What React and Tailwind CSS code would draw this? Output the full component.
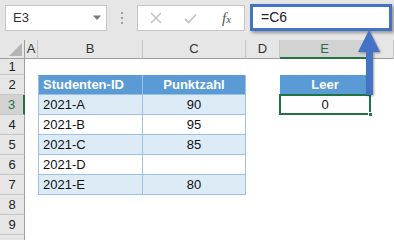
const COLS = [
  { key: "A", w: "w-[13px]" },
  { key: "B", w: "w-[105px]" },
  { key: "C", w: "w-[103px]" },
  { key: "D", w: "w-[34px]" },
  { key: "E", w: "w-[90px]" },
  { key: "", w: "flex-1" },
];

const tableRows = [
  { row: 3, id: "2021-A", score: "90", shade: true },
  { row: 4, id: "2021-B", score: "95", shade: false },
  { row: 5, id: "2021-C", score: "85", shade: true },
  { row: 6, id: "2021-D", score: "", shade: false },
  { row: 7, id: "2021-E", score: "80", shade: true },
];

function RowHead({ n, active }) {
  return (
    <div
      className={`w-[25px] shrink-0 flex items-center justify-center border-b border-[#c6c6c6] ${
        active
          ? "bg-[#d2d2d2] text-[#217346] border-r-2 border-r-[#217346]"
          : "bg-[#e6e6e6] text-[#222] border-r border-r-[#9f9f9f]"
      }`}
    >
      {n}
    </div>
  );
}

function Toolbar() {
  return (
    <div className="h-[40px] bg-[#e6e6e6] flex items-start pt-[5px] pl-[5px]">
      <div className="w-[102px] h-[26px] bg-white border border-[#c6c6c6] flex items-center justify-between pl-[7px] pr-[4px]">
        <span className="text-[13px] text-[#333]">E3</span>
        <svg width="10" height="6" viewBox="0 0 10 6">
          <path d="M1 0.5 L9 0.5 L5 5 Z" fill="#777" />
        </svg>
      </div>
      <div className="w-[30px] h-[26px] flex flex-col items-center justify-center gap-[3px]">
        <span className="w-[2px] h-[2px] bg-[#a0a0a0]" />
        <span className="w-[2px] h-[2px] bg-[#a0a0a0]" />
        <span className="w-[2px] h-[2px] bg-[#a0a0a0]" />
      </div>
      <div className="w-[108px] h-[26px] bg-white border border-[#c6c6c6] flex items-center">
        <svg className="ml-[12px]" width="12" height="12" viewBox="0 0 12 12">
          <path d="M1 1 L11 11 M11 1 L1 11" stroke="#c4c4c4" strokeWidth="1.5" />
        </svg>
        <svg className="ml-[22px]" width="13" height="11" viewBox="0 0 13 11">
          <path d="M1 6 L4.5 9.5 L12 1.5" stroke="#c4c4c4" strokeWidth="1.8" fill="none" />
        </svg>
        <span
          className="ml-[25px] text-[15px] italic text-[#555]"
          style={{ fontFamily: '"Liberation Serif", serif' }}
        >
          f<span className="text-[11px]">x</span>
        </span>
      </div>
      <div className="ml-[5px] -mt-[1px] w-[142px] h-[27px] bg-white border-[3px] border-[#4472c4] shadow-[2px_2px_3px_rgba(0,0,0,0.35)] flex items-center pl-[8px]">
        <span className="text-[14px] text-[#222]">=C6</span>
      </div>
    </div>
  );
}

function HeaderRow() {
  return (
    <div className="h-[19px] flex bg-[#e6e6e6] text-[13px] text-[#333]">
      <div className="w-[25px] shrink-0 border-r border-[#9f9f9f] border-b border-b-[#9f9f9f] relative">
        <svg className="absolute right-[2px] bottom-[2px]" width="13" height="13" viewBox="0 0 13 13">
          <path d="M13 0 L13 13 L0 13 Z" fill="#b4b4b4" />
        </svg>
      </div>
      {COLS.map((c, i) => (
        <div
          key={i}
          className={`${c.w} shrink-0 flex items-center justify-center border-r border-[#c6c6c6] ${
            c.key === "E"
              ? "bg-[#d2d2d2] text-[#217346] border-b-2 border-b-[#217346]"
              : "border-b border-b-[#9f9f9f]"
          }`}
        >
          {c.key}
        </div>
      ))}
    </div>
  );
}

export default function App() {
  return (
    <div
      className="relative w-[394px] h-[240px] overflow-hidden bg-white"
      style={{ fontFamily: '"Liberation Sans", Arial, sans-serif' }}
    >
      <Toolbar />
      <HeaderRow />

      <div className="text-[13px] text-[#111]">
        {/* row 1 */}
        <div className="h-[16px] flex">
          <RowHead n={1} />
        </div>

        {/* row 2: table header */}
        <div className="h-[20px] flex">
          <RowHead n={2} />
          <div className="w-[13px] shrink-0" />
          <div className="w-[105px] shrink-0 bg-[#5b9bd5] text-white font-bold flex items-center pl-[4px] border-l border-r border-b border-[#9bc2e6]">
            Studenten-ID
          </div>
          <div className="w-[103px] shrink-0 bg-[#5b9bd5] text-white font-bold flex items-center justify-center border-r border-b border-[#9bc2e6]">
            Punktzahl
          </div>
          <div className="w-[34px] shrink-0" />
          <div className="w-[90px] shrink-0 bg-[#5b9bd5] text-white font-bold flex items-center justify-center border-b border-[#9bc2e6]">
            Leer
          </div>
        </div>

        {tableRows.map((r) => (
          <div key={r.row} className="h-[20px] flex">
            <RowHead n={r.row} active={r.row === 3} />
            <div className="w-[13px] shrink-0" />
            <div
              className={`w-[105px] shrink-0 flex items-center pl-[4px] border-l border-r border-b border-[#9bc2e6] ${
                r.shade ? "bg-[#ddebf7]" : "bg-white"
              }`}
            >
              {r.id}
            </div>
            <div
              className={`w-[103px] shrink-0 flex items-center justify-center border-r border-b border-[#9bc2e6] ${
                r.shade ? "bg-[#ddebf7]" : "bg-white"
              }`}
            >
              {r.score}
            </div>
            <div className="w-[34px] shrink-0" />
            {r.row === 3 && (
              <div className="w-[90px] shrink-0 relative flex items-center justify-center">
                0
                <div className="absolute -top-[1px] -left-[1px] -right-[1px] bottom-0 border-2 border-[#217346]" />
                <div className="absolute -right-[3px] -bottom-[2px] w-[5px] h-[5px] bg-[#217346] border border-white" />
              </div>
            )}
          </div>
        ))}

        {[8, 9, ""].map((n, i) => (
          <div key={i} className="h-[20px] flex">
            <RowHead n={n} />
          </div>
        ))}
      </div>

      {/* arrow from E3 to the formula bar */}
      <svg
        className="absolute left-[356px] top-[28px]"
        width="28"
        height="70"
        viewBox="0 0 28 70"
        style={{ filter: "drop-shadow(1px 1px 1px rgba(0,0,0,0.35))" }}
      >
        <path d="M13 2 L24 24 L17 24 L17 67 L10 67 L10 24 L2 24 Z" fill="#4472c4" />
      </svg>
    </div>
  );
}
